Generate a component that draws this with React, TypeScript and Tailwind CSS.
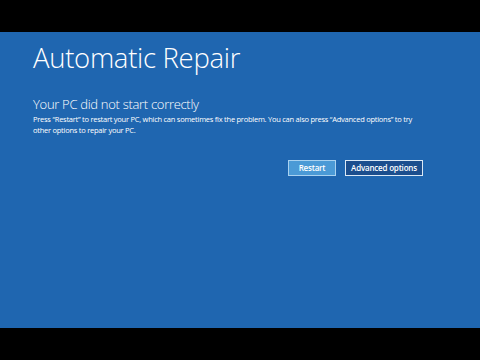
export default function App() {
  return (
    <div className="flex h-[360px] w-[480px] flex-col bg-black font-['Open_Sans','Liberation_Sans',sans-serif] text-white">
      <div className="h-8 shrink-0" />
      <main className="h-[296px] shrink-0 bg-[#1f66b0] pl-[33px] pr-[57px]">
        <h1 className="mt-[9px] text-[27.5px] font-light leading-[34px] tracking-[-0.3px]">Automatic Repair</h1>
        <h2 className="mt-[21px] text-[13px] font-light leading-[17px] tracking-[-0.3px]">Your PC did not start correctly</h2>
        <p className="mt-[1px] w-[388px] text-[7.5px] leading-[11px] tracking-[-0.25px]">
          Press “Restart” to restart your PC, which can sometimes fix the problem. You can also press “Advanced options” to try other options to repair your PC.
        </p>
        <div className="mt-[24px] flex justify-end gap-[9px]">
          <button className="h-4 w-12 border border-[#a9d2f0] bg-[#4b9ad6] text-[8px] font-semibold leading-[14px] tracking-[-0.2px] text-white">
            Restart
          </button>
          <button className="h-4 w-[78px] border border-[#dbe9f6] bg-[#1b4e8e] text-[8px] font-semibold leading-[14px] tracking-[-0.2px] text-white">
            Advanced options
          </button>
        </div>
      </main>
    </div>
  );
}
